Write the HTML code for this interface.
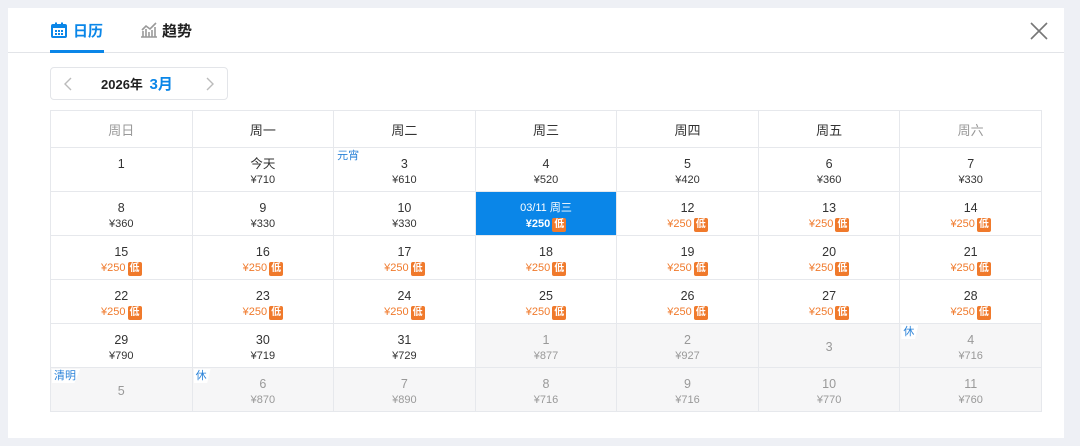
<!DOCTYPE html><html><head><meta charset="utf-8"><style>
body{margin:0;width:1080px;height:446px;background:#eef0f5;font-family:"Liberation Sans","Noto Sans CJK SC",sans-serif;position:relative;overflow:hidden}
.p{position:absolute;left:8px;top:8px;width:1056px;height:430px;background:#fff}
.tabs{position:absolute;left:0;top:0;width:1056px;height:44px;border-bottom:1px solid #e2e4e8}
.tab{position:absolute;top:12px;font-size:15px;font-weight:bold;color:#222}
.ul{position:absolute;left:42px;top:42px;width:54px;height:3px;background:#0a86e8}
.nav{position:absolute;left:42px;top:59px;width:176px;height:31px;border:1px solid #e3e5e9;border-radius:4px}
table{position:absolute;left:42px;top:102px;border-collapse:collapse;table-layout:fixed;width:992px}
td{border:1px solid #e6e8ec;height:43px;text-align:center;vertical-align:top;padding:0;position:relative;font-size:12.5px;color:#333}
tr.h td{height:36px;vertical-align:middle;font-size:13px;color:#333}
.d{margin-top:8px;line-height:16px}
.pr{font-size:11px;line-height:16px;color:#333}
.o{color:#f07a2c}
.b{display:inline-block;background:#f07a2c;color:#fff;font-size:10px;line-height:14px;padding:0 2px;border-radius:2px;margin-left:2px;font-weight:bold}
.g{background:#f6f6f7;color:#999}.g .pr{color:#999}
.sel{background:#0a86e8;color:#fff}.sel .pr{color:#fff;font-weight:bold}
.tag{position:absolute;left:1px;top:1px;font-size:11px;color:#2a82d8;background:#fff;padding:0 4px 0 2px;line-height:14px;clip-path:polygon(0 0,100% 0,80% 100%,0 100%)}
</style></head><body><div class="p">
<div class="tabs">
<svg style="position:absolute;left:43px;top:14px" width="16" height="16" viewBox="0 0 16 16"><rect x="1" y="3" width="14" height="12" rx="1" fill="none" stroke="#0a86e8" stroke-width="2"/><rect x="1" y="3" width="14" height="3" fill="#0a86e8"/><rect x="4" y="0.5" width="2" height="4" fill="#0a86e8"/><rect x="10" y="0.5" width="2" height="4" fill="#0a86e8"/><g fill="#0a86e8"><rect x="4" y="8" width="2" height="2"/><rect x="7" y="8" width="2" height="2"/><rect x="10" y="8" width="2" height="2"/><rect x="4" y="11" width="2" height="2"/><rect x="7" y="11" width="2" height="2"/><rect x="10" y="11" width="2" height="2"/></g></svg>
<div class="tab" style="left:65px;color:#0a86e8">日历</div>
<svg style="position:absolute;left:132px;top:14px" width="18" height="16" viewBox="0 0 18 16"><path d="M1 15h16M3 15V9M6 15V7M9 15V10M12 15V8M15 15V5M2 8l4-4 4 3 6-6" stroke="#999" stroke-width="1.6" fill="none"/></svg>
<div class="tab" style="left:154px">趋势</div>
<div class="ul"></div>
<svg style="position:absolute;left:1022px;top:14px" width="18" height="18" viewBox="0 0 18 18"><path d="M1 1l16 16M17 1L1 17" stroke="#777" stroke-width="1.6"/></svg>
</div>
<div class="nav">
<svg style="position:absolute;left:13px;top:9px" width="8" height="14"><path d="M7 1L1 7l6 6" stroke="#bbb" stroke-width="1.4" fill="none"/></svg>
<div style="position:absolute;left:50px;top:5px;font-size:13px;font-weight:bold;color:#222">2026年 <span style="color:#0a86e8;font-size:15px;margin-left:3px">3月</span></div>
<svg style="position:absolute;left:155px;top:9px" width="8" height="14"><path d="M1 1l6 6-6 6" stroke="#bbb" stroke-width="1.4" fill="none"/></svg>
</div>
<table>
<tr class="h"><td style="color:#999">周日</td><td>周一</td><td>周二</td><td>周三</td><td>周四</td><td>周五</td><td style="color:#999">周六</td></tr>
<tr><td><div class="d">1</div></td><td><div class="d">今天</div><div class="pr">¥710</div></td><td><span class="tag">元宵</span><div class="d">3</div><div class="pr">¥610</div></td><td><div class="d">4</div><div class="pr">¥520</div></td><td><div class="d">5</div><div class="pr">¥420</div></td><td><div class="d">6</div><div class="pr">¥360</div></td><td><div class="d">7</div><div class="pr">¥330</div></td></tr>
<tr><td><div class="d">8</div><div class="pr">¥360</div></td><td><div class="d">9</div><div class="pr">¥330</div></td><td><div class="d">10</div><div class="pr">¥330</div></td><td class="sel"><div class="d" style="font-size:11px">03/11 周三</div><div class="pr">¥250<span class="b">低</span></div></td><td><div class="d">12</div><div class="pr o">¥250<span class="b">低</span></div></td><td><div class="d">13</div><div class="pr o">¥250<span class="b">低</span></div></td><td><div class="d">14</div><div class="pr o">¥250<span class="b">低</span></div></td></tr>
<tr><td><div class="d">15</div><div class="pr o">¥250<span class="b">低</span></div></td><td><div class="d">16</div><div class="pr o">¥250<span class="b">低</span></div></td><td><div class="d">17</div><div class="pr o">¥250<span class="b">低</span></div></td><td><div class="d">18</div><div class="pr o">¥250<span class="b">低</span></div></td><td><div class="d">19</div><div class="pr o">¥250<span class="b">低</span></div></td><td><div class="d">20</div><div class="pr o">¥250<span class="b">低</span></div></td><td><div class="d">21</div><div class="pr o">¥250<span class="b">低</span></div></td></tr>
<tr><td><div class="d">22</div><div class="pr o">¥250<span class="b">低</span></div></td><td><div class="d">23</div><div class="pr o">¥250<span class="b">低</span></div></td><td><div class="d">24</div><div class="pr o">¥250<span class="b">低</span></div></td><td><div class="d">25</div><div class="pr o">¥250<span class="b">低</span></div></td><td><div class="d">26</div><div class="pr o">¥250<span class="b">低</span></div></td><td><div class="d">27</div><div class="pr o">¥250<span class="b">低</span></div></td><td><div class="d">28</div><div class="pr o">¥250<span class="b">低</span></div></td></tr>
<tr><td><div class="d">29</div><div class="pr">¥790</div></td><td><div class="d">30</div><div class="pr">¥719</div></td><td><div class="d">31</div><div class="pr">¥729</div></td><td class="g"><div class="d">1</div><div class="pr">¥877</div></td><td class="g"><div class="d">2</div><div class="pr">¥927</div></td><td class="g"><div class="d" style="margin-top:15px">3</div></td><td class="g"><span class="tag">休</span><div class="d">4</div><div class="pr">¥716</div></td></tr>
<tr><td class="g"><span class="tag">清明</span><div class="d" style="margin-top:15px">5</div></td><td class="g"><span class="tag">休</span><div class="d">6</div><div class="pr">¥870</div></td><td class="g"><div class="d">7</div><div class="pr">¥890</div></td><td class="g"><div class="d">8</div><div class="pr">¥716</div></td><td class="g"><div class="d">9</div><div class="pr">¥716</div></td><td class="g"><div class="d">10</div><div class="pr">¥770</div></td><td class="g"><div class="d">11</div><div class="pr">¥760</div></td></tr>
</table>
</div></body></html>
